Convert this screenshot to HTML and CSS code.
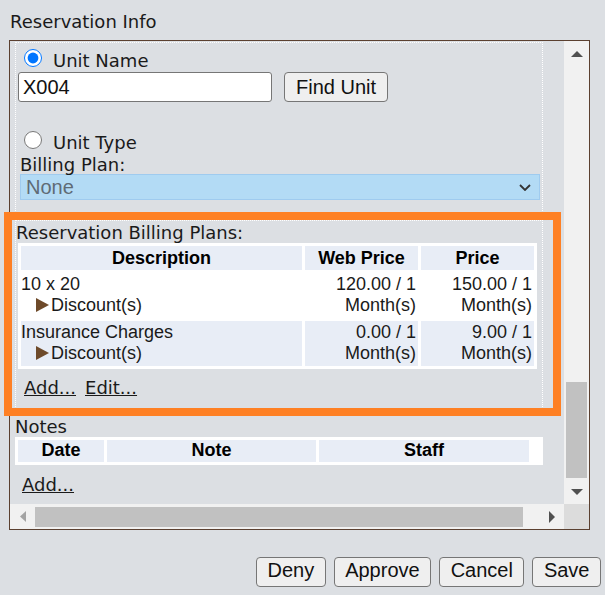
FILE: index.html
```html
<!DOCTYPE html>
<html>
<head>
<meta charset="utf-8">
<title>Reservation Info</title>
<link rel="stylesheet" href="styles.css">
</head>
<body>
<div class="title">Reservation Info</div>
<div class="frame">
  <div class="viewport">
    <div class="box top-box">
      <label class="opt"><input type="radio" name="sel" checked><span>Unit Name</span></label>
      <div class="unit-row">
        <input class="text" type="text" value="X004">
        <button class="btn find" type="button">Find Unit</button>
      </div>
      <label class="opt opt2"><input type="radio" name="sel"><span>Unit Type</span></label>
      <div class="lbl plan-lbl">Billing Plan:</div>
      <div class="select"><span>None</span><svg width="12" height="7" viewBox="0 0 12 7"><polyline points="1,1 6,6 11,1" fill="none" stroke="#333" stroke-width="1.8"/></svg></div>
    </div>
    <div class="box plans">
      <div class="lbl">Reservation Billing Plans:</div>
      <table class="grid plans-grid">
        <colgroup><col class="c-desc"><col class="c-price"><col class="c-price"></colgroup>
        <thead>
          <tr><th>Description</th><th>Web Price</th><th>Price</th></tr>
        </thead>
        <tbody>
          <tr>
            <td class="desc">10 x 20<div class="disc"><svg width="13" height="14" viewBox="0 0 13 14"><polygon points="0,0 13,7 0,14" fill="#6e4a2a"/></svg>Discount(s)</div></td>
            <td class="num">120.00 / 1<br>Month(s)</td>
            <td class="num">150.00 / 1<br>Month(s)</td>
          </tr>
          <tr class="alt">
            <td class="desc">Insurance Charges<div class="disc"><svg width="13" height="14" viewBox="0 0 13 14"><polygon points="0,0 13,7 0,14" fill="#6e4a2a"/></svg>Discount(s)</div></td>
            <td class="num">0.00 / 1<br>Month(s)</td>
            <td class="num">9.00 / 1<br>Month(s)</td>
          </tr>
        </tbody>
      </table>
      <div class="links"><a href="#">Add...</a><a href="#">Edit...</a></div>
    </div>
    <div class="notes">
      <div class="lbl">Notes</div>
      <table class="grid notes-grid">
        <colgroup><col class="n-date"><col class="n-note"><col class="n-staff"><col class="n-pad"></colgroup>
        <thead>
          <tr><th>Date</th><th>Note</th><th>Staff</th><th class="blank"></th></tr>
        </thead>
      </table>
      <div class="links notes-links"><a href="#">Add...</a></div>
    </div>
  </div>
  <div class="vbar">
    <div class="sbtn"><svg width="12" height="6" viewBox="0 0 12 6"><polygon points="0,6 6,0 12,6" fill="#505050"/></svg></div>
    <div class="vtrack"><div class="vthumb"></div></div>
    <div class="sbtn"><svg width="12" height="6" viewBox="0 0 12 6"><polygon points="0,0 12,0 6,6" fill="#505050"/></svg></div>
  </div>
  <div class="hbar">
    <div class="sbtn"><svg width="6" height="11" viewBox="0 0 6 11"><polygon points="6,0 6,11 0,5.5" fill="#a3a3a3"/></svg></div>
    <div class="htrack"><div class="hthumb"></div></div>
    <div class="sbtn"><svg width="6" height="12" viewBox="0 0 6 12"><polygon points="0,0 6,6 0,12" fill="#505050"/></svg></div>
  </div>
  <div class="corner"></div>
</div>
<div class="actions">
  <button class="btn act" type="button">Deny</button>
  <button class="btn act" type="button">Approve</button>
  <button class="btn act" type="button">Cancel</button>
  <button class="btn act" type="button">Save</button>
</div>
<div class="highlight"></div>
</body>
</html>
```

FILE: styles.css
```css
* { box-sizing: border-box; }
html, body { margin: 0; padding: 0; }
body {
  position: relative;
  width: 605px;
  height: 595px;
  overflow: hidden;
  background: #dcdfe3;
  font-family: "DejaVu Sans", Verdana, sans-serif;
  font-size: 18px;
  color: #1a1a1a;
}
.title {
  height: 40px;
  padding: 11px 0 0 10px;
  line-height: 22px;
}
.frame {
  margin-left: 9px;
  width: 581px;
  height: 490px;
  border: 1px solid #5b4030;
  display: grid;
  grid-template-columns: 554px 25px;
  grid-template-rows: 463px 25px;
}
.viewport {
  overflow: hidden;
  padding: 1px 0 0 5px;
}
.box {
  width: 528px;
  border: 1px dotted #fff;
}
.top-box { padding: 7px 0 14px 0; }
.opt {
  display: flex;
  align-items: flex-start;
  height: 22px;
  line-height: 22px;
}
.opt input {
  flex: none;
  width: 18px;
  height: 18px;
  margin: -1px 0 0 8px;
}
.opt span { margin-left: 11px; }
.opt2 { margin-top: 30px; }
.unit-row {
  display: flex;
  margin-left: 2px;
  height: 30px;
}
.text {
  width: 254px;
  height: 30px;
  margin: 0;
  padding: 0 4px;
  border: 1px solid #767676;
  border-radius: 3px;
  background: #fff;
  font: 20px "Liberation Sans", Arial, sans-serif;
  color: #111;
}
.btn {
  height: 30px;
  margin: 0;
  padding: 0 10.5px;
  border: 1px solid #767676;
  border-radius: 4px;
  background: #efefef;
  font: 20px "Liberation Sans", Arial, sans-serif;
  color: #111;
}
.find {
  margin-left: 12px;
  width: 104px;
  padding: 0;
}
.lbl { line-height: 20px; }
.plan-lbl { margin: 1px 0 0 4px; }
.select {
  margin: -1px 0 0 4px;
  width: 520px;
  height: 26px;
  padding: 0 8px 0 5px;
  display: flex;
  align-items: center;
  justify-content: space-between;
  background: #b3dbf5;
  border: 1px solid #9fcbef;
  font: 20px "Liberation Sans", Arial, sans-serif;
  color: #5f6b75;
}
.plans {
  margin-top: 5px;
  padding: 2px 0 9.5px 0;
}
.grid {
  border-collapse: separate;
  border-spacing: 3px;
  table-layout: fixed;
  background: #fff;
  font: 18px "Liberation Sans", Arial, sans-serif;
  color: #1a1a1a;
}
.grid th {
  padding: 1.5px 2px;
  background: #e8edf6;
  color: #000;
  font-weight: bold;
  text-align: center;
}
.grid th.blank { background: transparent; }
.grid td {
  padding: 1px 2px 2px;
  vertical-align: top;
}
.grid td.desc { padding-left: 0; text-align: left; }
.grid td.num { text-align: right; }
.grid tr.alt td { background: #e8edf6; }
.plans-grid { margin-left: 2px; width: 519px; }
.c-desc { width: 281px; }
.c-price { width: 113px; }
.disc { padding-left: 15px; }
.disc svg { vertical-align: -1px; margin-right: 2px; }
.links {
  display: flex;
  margin-top: 9px;
  padding-left: 8px;
  line-height: 20px;
}
.links a {
  color: #1a1a1a;
  text-decoration: underline;
  margin-right: 9px;
}
.notes {
  width: 528px;
  margin-top: 8px;
}
.notes-grid { width: 528px; }
.notes-grid th { padding: 0.5px 2px; }
.n-date { width: 86px; }
.n-note { width: 209px; }
.n-staff { width: 210px; }
.n-pad { width: 8px; }
.notes-links { margin-top: 10px; padding-left: 7px; }
.vbar {
  display: flex;
  flex-direction: column;
  background: #f1f1f1;
}
.sbtn {
  flex: none;
  width: 25px;
  height: 25px;
  display: flex;
  align-items: center;
  justify-content: center;
}
.vtrack {
  flex: 1;
  display: flex;
  flex-direction: column;
  justify-content: flex-end;
}
.vthumb {
  width: 21px;
  height: 96px;
  margin: 0 0 1px 2px;
  background: #c1c1c1;
}
.hbar {
  display: flex;
  background: #f1f1f1;
}
.htrack { flex: 1; }
.hthumb {
  width: 488px;
  height: 20px;
  margin-top: 3px;
  background: #c1c1c1;
}
.corner { background: #dcdcdc; }
.actions {
  display: flex;
  justify-content: flex-end;
  gap: 8px;
  margin-top: 27px;
  padding-right: 4px;
}
.act { padding-bottom: 3px; }
.highlight {
  position: absolute;
  left: 4px;
  top: 212px;
  width: 557px;
  height: 204px;
  border: 8px solid #fe8024;
  pointer-events: none;
}
```
